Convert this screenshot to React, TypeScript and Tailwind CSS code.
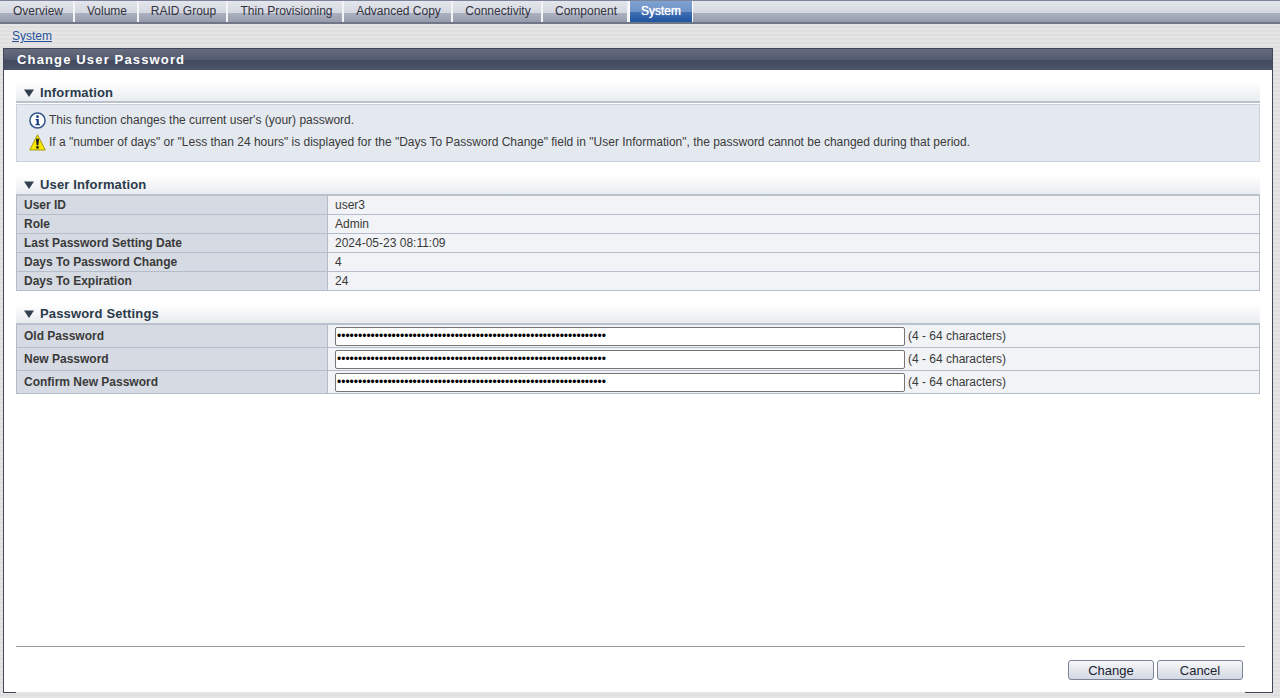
import React from "react";

const tabs: [string, string][] = [
  ["Overview", "w-[75px] pl-[3px]"],
  ["Volume", "w-[64px] pl-[2px]"],
  ["RAID Group", "w-[89px] pl-[2px]"],
  ["Thin Provisioning", "w-[116px] pl-[3px]"],
  ["Advanced Copy", "w-[109px] pl-[2px]"],
  ["Connectivity", "w-[90px] pl-[2px]"],
  ["Component", "w-[86px] pl-[2px]"],
];

const pw = "x".repeat(64);

function SectionHead({ title, className }: { title: string; className?: string }) {
  return (
    <div className={"flex h-[21px] items-center border-b-2 border-[#b9c1cc] bg-gradient-to-b from-white to-[#e9ecf0] pl-[8px] " + (className ?? "")}>
      <svg width="10" height="8" viewBox="0 0 10 8" className="mr-[6px]">
        <path d="M0 0.5H10L5 8Z" fill="#33404f" />
      </svg>
      <span className="text-[13px] font-bold tracking-[0.15px] text-[#2b3a4a]">{title}</span>
    </div>
  );
}

function Row({ label, value }: { label: string; value: string }) {
  return (
    <div className="flex h-[19px] border-b border-[#b4bdc9]">
      <div className="flex w-[311px] items-center border-r border-[#b4bdc9] bg-[#d6dbe3] pl-[7px] font-bold text-[#3a3a3a]">{label}</div>
      <div className="flex flex-1 items-center bg-[#f1f3f6] pl-[7px] text-[#3a3a3a]">{value}</div>
    </div>
  );
}

function PwRow({ label }: { label: string }) {
  return (
    <div className="flex h-[23px] border-b border-[#b4bdc9]">
      <div className="flex w-[311px] items-center border-r border-[#b4bdc9] bg-[#d6dbe3] pl-[7px] font-bold text-[#3a3a3a]">{label}</div>
      <div className="flex flex-1 items-center bg-[#f1f3f6] pl-[7px] text-[#3a3a3a]">
        <input
          type="password"
          readOnly
          value={pw}
          className="h-[19px] w-[570px] rounded-[2px] border border-[#767676] bg-white px-[1px] text-[12px] text-black outline-none"
        />
        <span className="ml-[3px]">(4 - 64 characters)</span>
      </div>
    </div>
  );
}

function Btn({ label }: { label: string }) {
  return (
    <button className="h-[20px] w-[86px] rounded-[3px] border border-[#7b8496] bg-gradient-to-b from-[#f6f7f9] to-[#d3d9e3] text-[13px] leading-none text-[#1c2430]">
      {label}
    </button>
  );
}

export default function App() {
  return (
    <div className="flex h-[698px] w-[1280px] flex-col overflow-hidden bg-[repeating-linear-gradient(180deg,#e5e5e5_0px,#e5e5e5_2px,#dfdfdf_2px,#dfdfdf_4px)] font-['Liberation_Sans',Arial,sans-serif] text-[12px]">
      <div className="flex h-[24px] border-t border-b-2 border-t-[#7d859c] border-b-[#6f7688] bg-[linear-gradient(180deg,#e4e6ec_0%,#d5d8e0_55%,#abb1c0_58%,#969cad_100%)]">
        {tabs.map(([t, w]) => (
          <div key={t} className={"flex items-center justify-center border-r-2 border-r-[#f1f3f6] pb-[1px] text-[#33333d] " + w}>
            {t}
          </div>
        ))}
        <div className="flex w-[64px] items-center justify-center border-x border-x-white bg-[linear-gradient(180deg,#7da1d0_0%,#6f93c6_50%,#3c6db3_55%,#1f569f_100%)] pb-[1px] text-white">
          <span className="[text-shadow:0_0_1px_#fff]">System</span>
        </div>
      </div>

      <div className="flex h-[24px] items-center pl-[12px]">
        <a className="text-[#27529f] underline">System</a>
      </div>

      <div className="ml-[3px] mr-[7px] mb-[5px] flex min-h-0 flex-1 flex-col border border-[#3e4658] bg-white">
        <div className="flex h-[21px] items-center bg-[linear-gradient(180deg,#666c7d_0%,#545b6e_50%,#414a60_55%,#4c546a_100%)] pl-[13px] text-[13px] font-bold tracking-[1.15px] text-white">
          Change User Password
        </div>

        <div className="flex min-h-0 flex-1 flex-col px-[12px] pt-[12px]">
          <div className="w-[1244px]">
            <SectionHead title="Information" className="pt-[2px]" />
            <div className="mt-[1px] flex h-[58px] flex-col border border-[#ccd2db] bg-[#e4e9f0] pl-[12px] pt-[5px] text-[#3a3a3a]">
              <div className="flex h-[20px] items-center">
                <svg width="17" height="17" viewBox="0 0 18 18" className="mr-[3px]">
                  <circle cx="9" cy="9" r="8" fill="#fff" stroke="#34588d" strokeWidth="1.6" />
                  <circle cx="9" cy="4.9" r="1.5" fill="#173f80" />
                  <path d="M7 7.4H10.4V12.6H11.5V14H6.8V12.6H8.1V8.8H7Z" fill="#173f80" />
                </svg>
                <span>This function changes the current user's (your) password.</span>
              </div>
              <div className="mt-[2px] flex h-[20px] items-center">
                <svg width="17" height="17" viewBox="0 0 17 17" className="mr-[3px]">
                  <path d="M8.5 0.8L16.3 16H0.7Z" fill="#f8e600" stroke="#a69a10" strokeWidth="1" strokeLinejoin="round" />
                  <path d="M7 4.8H10L9.4 11.2H7.6Z" fill="#1a1a1a" />
                  <rect x="7.3" y="12.2" width="2.4" height="2.4" fill="#1a1a1a" />
                </svg>
                <span>If a "number of days" or "Less than 24 hours" is displayed for the "Days To Password Change" field in "User Information", the password cannot be changed during that period.</span>
              </div>
            </div>

            <SectionHead title="User Information" className="mt-[13px]" />
            <div className="border-x border-[#b4bdc9]">
              <Row label="User ID" value="user3" />
              <Row label="Role" value="Admin" />
              <Row label="Last Password Setting Date" value="2024-05-23 08:11:09" />
              <Row label="Days To Password Change" value="4" />
              <Row label="Days To Expiration" value="24" />
            </div>

            <SectionHead title="Password Settings" className="mt-[13px]" />
            <div className="border-x border-[#b4bdc9]">
              <PwRow label="Old Password" />
              <PwRow label="New Password" />
              <PwRow label="Confirm New Password" />
            </div>
          </div>

          <div className="mt-auto w-[1229px] border-t border-t-[#9a9a9a] shadow-[0_1px_0_#e6e6e6]">
            <div className="flex justify-end gap-[3px] pr-[2px] pt-[13px] pb-[12px]">
              <Btn label="Change" />
              <Btn label="Cancel" />
            </div>
          </div>
        </div>
      </div>
    </div>
  );
}
